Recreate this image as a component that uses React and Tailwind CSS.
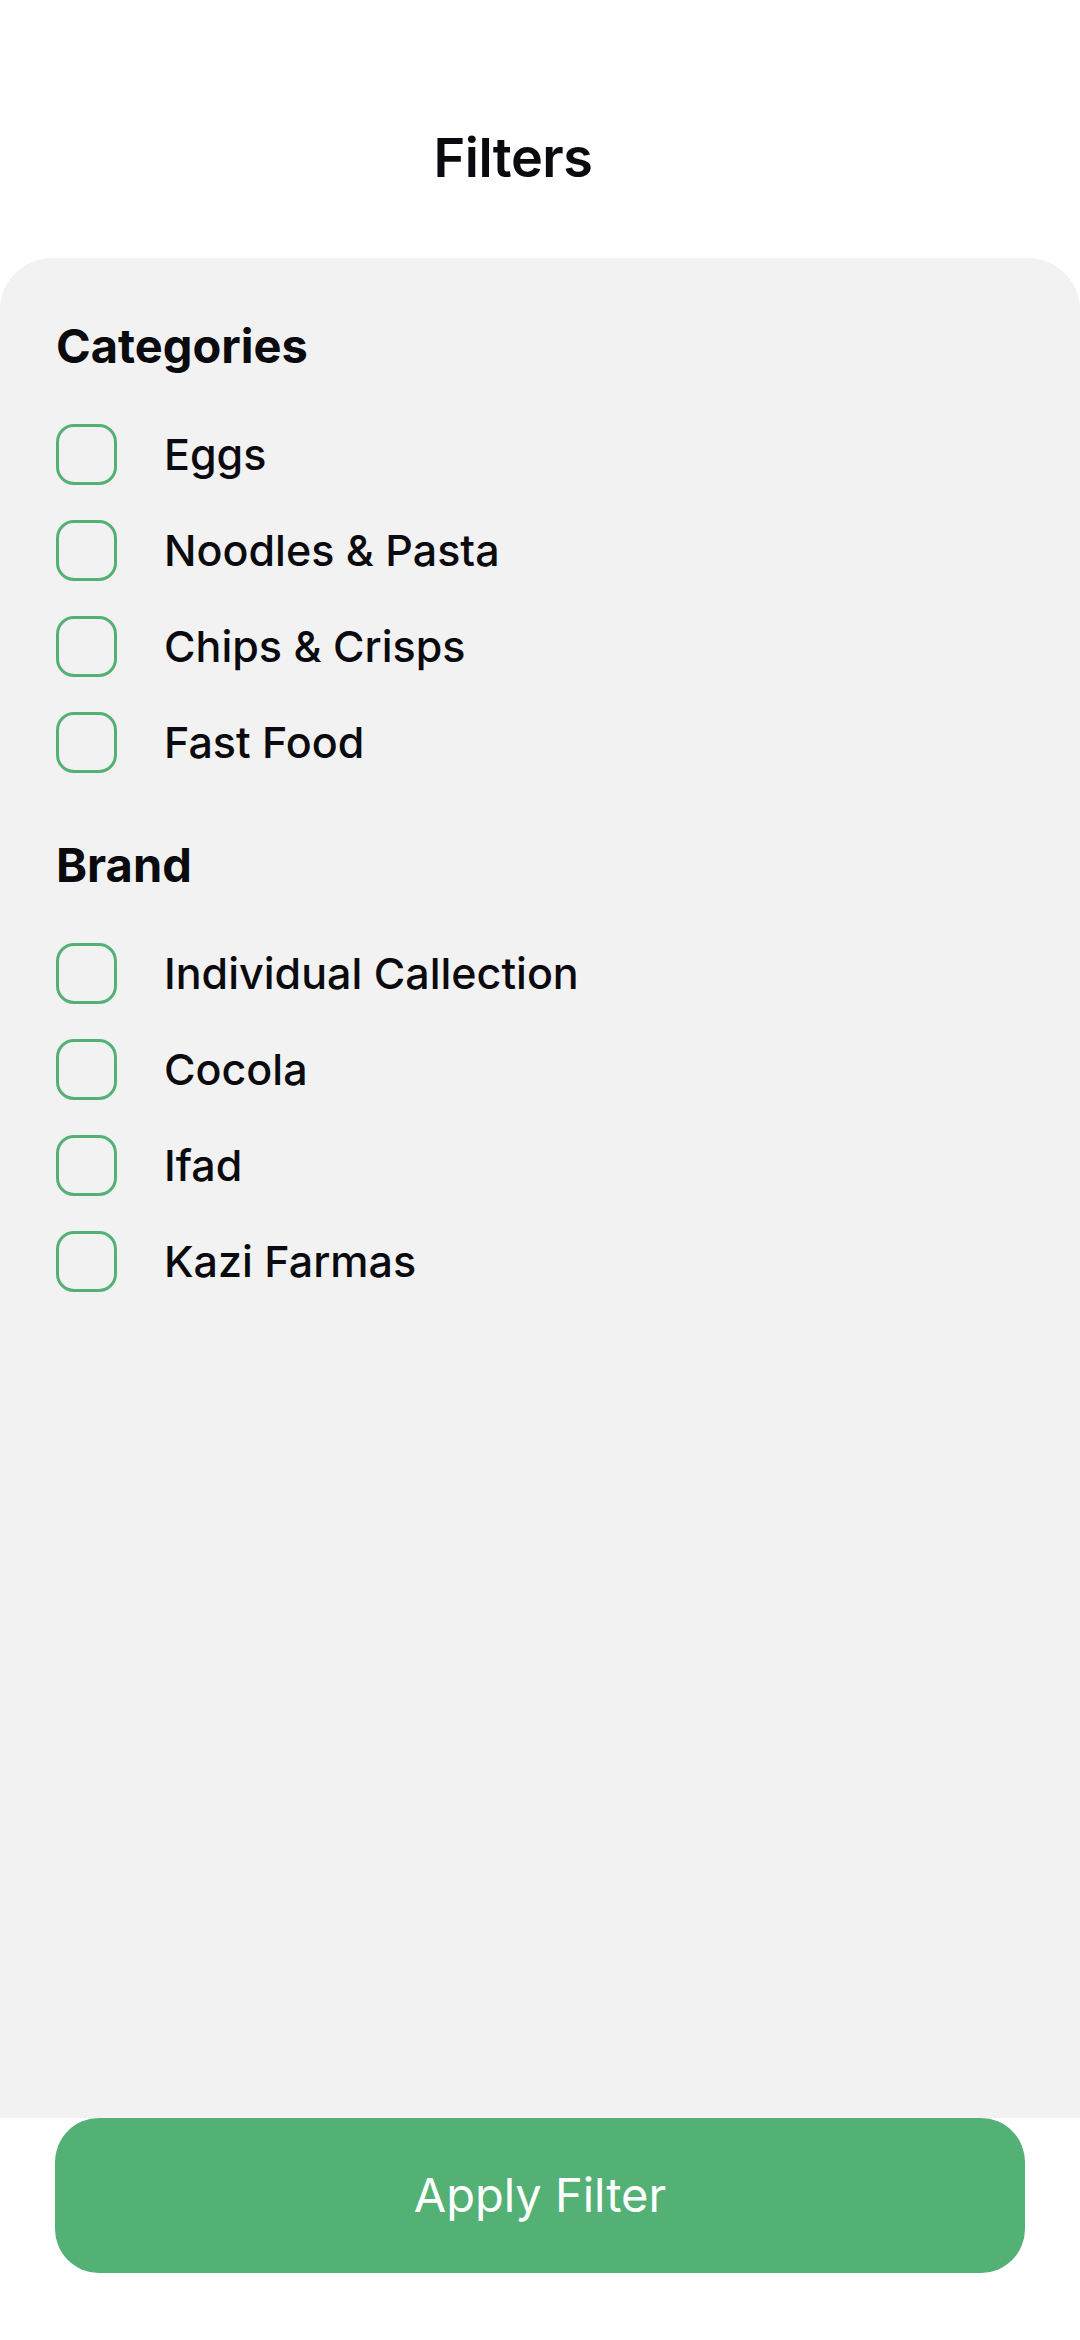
const categories = ["Eggs", "Noodles & Pasta", "Chips & Crisps", "Fast Food"];
const brands = ["Individual Callection", "Cocola", "Ifad", "Kazi Farmas"];

export default function App() {
  return (
    <div
      className="w-[1080px] h-[2340px] bg-white flex flex-col text-[#0b0b0f]"
      style={{ fontFamily: "Inter, 'Noto Sans', sans-serif" }}
    >
      {/* Header */}
      <div className="h-[258px] flex justify-center pt-[131px] pr-[54px]">
        <h1 className="text-[54px] leading-none font-semibold tracking-[-0.5px]">Filters</h1>
      </div>

      {/* Filter panel */}
      <div className="flex-1 bg-[#f2f2f2] rounded-t-[52px] px-[56px] pt-[64px]">
        <Section title="Categories" items={categories} />
        <div className="h-[68px]" />
        <Section title="Brand" items={brands} />
      </div>

      {/* Bottom action */}
      <div className="px-[55px] pb-[67px]">
        <button
          type="button"
          className="w-full h-[155px] rounded-[44px] bg-[#53b175] text-white text-[47px] font-normal flex items-center justify-center"
        >
          Apply Filter
        </button>
      </div>
    </div>
  );
}

function Section({ title, items }) {
  return (
    <div>
      <h2 className="text-[47px] leading-none font-bold">{title}</h2>
      <div className="mt-[55px] flex flex-col gap-[35px]">
        {items.map((item) => (
          <label key={item} className="flex items-center gap-[47px]">
            <span className="w-[61px] h-[61px] rounded-[18px] border-[3px] border-[#53b175] shrink-0" />
            <span className="text-[43px] leading-none font-medium">{item}</span>
          </label>
        ))}
      </div>
    </div>
  );
}
